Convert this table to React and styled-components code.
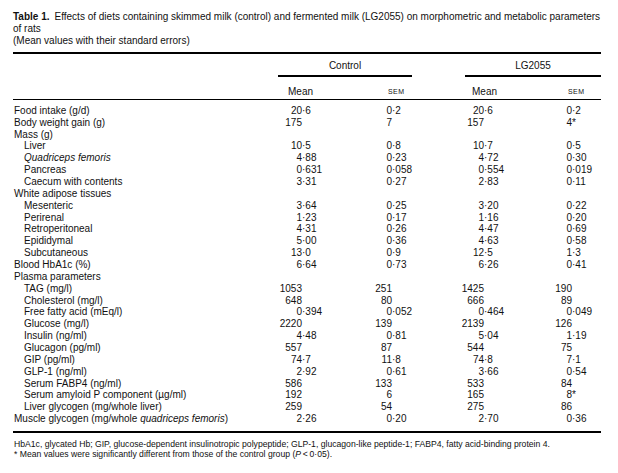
import React from "react"
import styled, { createGlobalStyle } from "styled-components"

const GlobalStyle = createGlobalStyle`
  html, body {
    margin: 0;
    padding: 0;
    background: #fff;
  }
  body {
    font-family: "Liberation Sans", Arial, sans-serif;
    color: #111;
  }
`

const COLS = "257px 95px 90px 100px 46px"

const Page = styled.div`
  width: 588px;
  padding: 11px 0 0 13px;
`

const Caption = styled.div`
  font-size: 10px;
  line-height: 12px;
`

const CaptionLine = styled.div`
  white-space: nowrap;
`

const CaptionLabel = styled.b`
  font-weight: bold;
`

const Table = styled.div`
  margin-top: 5px;
  border-top: 2px solid #000;
  border-bottom: 2px solid #000;
  font-size: 10px;
  line-height: 12px;
`

const HeadRow = styled.div`
  display: grid;
  grid-template-columns: ${COLS};
  border-bottom: ${p => (p.$ruled ? "1px solid #000" : "none")};
  padding-top: ${p => p.$top}px;
  padding-bottom: ${p => p.$bottom}px;
`

const GroupHead = styled.div`
  grid-column: span 2;
  margin-left: ${p => p.$inset}px;
  width: ${p => p.$w}px;
  text-align: center;

  &::after {
    content: "";
    display: block;
    height: 2px;
    margin-top: 3px;
    background: #000;
  }
`

const SubHead = styled.div`
  padding-left: ${p => p.$pad}px;
  font-size: ${p => (p.$small ? "7px" : "10px")};
  letter-spacing: ${p => (p.$small ? "0.4px" : "0")};
`

const Body = styled.div`
  padding: 4.8px 0 6.2px;
`

const Row = styled.div`
  display: grid;
  grid-template-columns: ${COLS};
  height: 11.87px;
  line-height: 11.87px;
  white-space: nowrap;
`

const Label = styled.div`
  padding-left: ${p => (p.$indent ? "11px" : "1px")};
  font-style: ${p => (p.$italic ? "italic" : "normal")};
`

const Cell = styled.div`
  white-space: nowrap;
`

const Int = styled.span`
  display: inline-block;
  width: ${p => p.$w}px;
  text-align: right;
`

const Notes = styled.div`
  margin-top: 5.8px;
  font-size: 8.65px;
  line-height: 10px;
  padding-left: 1px;
`

const NoteLine = styled.div`
  white-space: nowrap;
`

// width of the integer part, so the decimal points line up in each column
const INT_W = [32, 27, 29, 17]

const Num = ({ v, w }) => {
  const star = v.endsWith("*")
  const raw = star ? v.slice(0, -1) : v
  const [int, frac] = raw.split("·")
  return (
    <Cell>
      <Int $w={w}>{int}</Int>
      {frac !== undefined && "·" + frac}
      {star && "*"}
    </Cell>
  )
}

const rows = [
  { label: "Food intake (g/d)", vals: ["20·6", "0·2", "20·6", "0·2"] },
  { label: "Body weight gain (g)", vals: ["175", "7", "157", "4*"] },
  { label: "Mass (g)" },
  { label: "Liver", indent: true, vals: ["10·5", "0·8", "10·7", "0·5"] },
  { label: "Quadriceps femoris", indent: true, italic: true, vals: ["4·88", "0·23", "4·72", "0·30"] },
  { label: "Pancreas", indent: true, vals: ["0·631", "0·058", "0·554", "0·019"] },
  { label: "Caecum with contents", indent: true, vals: ["3·31", "0·27", "2·83", "0·11"] },
  { label: "White adipose tissues" },
  { label: "Mesenteric", indent: true, vals: ["3·64", "0·25", "3·20", "0·22"] },
  { label: "Perirenal", indent: true, vals: ["1·23", "0·17", "1·16", "0·20"] },
  { label: "Retroperitoneal", indent: true, vals: ["4·31", "0·26", "4·47", "0·69"] },
  { label: "Epididymal", indent: true, vals: ["5·00", "0·36", "4·63", "0·58"] },
  { label: "Subcutaneous", indent: true, vals: ["13·0", "0·9", "12·5", "1·3"] },
  { label: "Blood HbA1c (%)", vals: ["6·64", "0·73", "6·26", "0·41"] },
  { label: "Plasma parameters" },
  { label: "TAG (mg/l)", indent: true, vals: ["1053", "251", "1425", "190"] },
  { label: "Cholesterol (mg/l)", indent: true, vals: ["648", "80", "666", "89"] },
  { label: "Free fatty acid (mEq/l)", indent: true, vals: ["0·394", "0·052", "0·464", "0·049"] },
  { label: "Glucose (mg/l)", indent: true, vals: ["2220", "139", "2139", "126"] },
  { label: "Insulin (ng/ml)", indent: true, vals: ["4·48", "0·81", "5·04", "1·19"] },
  { label: "Glucagon (pg/ml)", indent: true, vals: ["557", "87", "544", "75"] },
  { label: "GIP (pg/ml)", indent: true, vals: ["74·7", "11·8", "74·8", "7·1"] },
  { label: "GLP-1 (ng/ml)", indent: true, vals: ["2·92", "0·61", "3·66", "0·54"] },
  { label: "Serum FABP4 (ng/ml)", indent: true, vals: ["586", "133", "533", "84"] },
  { label: "Serum amyloid P component (µg/ml)", indent: true, vals: ["192", "6", "165", "8*"] },
  { label: "Liver glycogen (mg/whole liver)", indent: true, vals: ["259", "54", "275", "86"] },
  {
    label: (
      <>
        Muscle glycogen (mg/whole <i>quadriceps femoris</i>)
      </>
    ),
    vals: ["2·26", "0·20", "2·70", "0·36"],
  },
]

const App = () => {
  return (
    <Page>
      <GlobalStyle />
      <Caption>
        <CaptionLine>
          <CaptionLabel>Table 1.</CaptionLabel>
          {"\u2002Effects of diets containing skimmed milk (control) and fermented milk (LG2055) on morphometric and metabolic parameters"}
        </CaptionLine>
        <CaptionLine>of rats</CaptionLine>
        <CaptionLine>(Mean values with their standard errors)</CaptionLine>
      </Caption>

      <Table>
        <HeadRow $top={6} $bottom={0}>
          <div />
          <GroupHead $inset={8} $w={134}>Control</GroupHead>
          <GroupHead $inset={10} $w={136}>LG2055</GroupHead>
        </HeadRow>
        <HeadRow $ruled $top={9} $bottom={1}>
          <div />
          <SubHead $pad={18}>Mean</SubHead>
          <SubHead $pad={23} $small>SEM</SubHead>
          <SubHead $pad={17}>Mean</SubHead>
          <SubHead $pad={13} $small>SEM</SubHead>
        </HeadRow>

        <Body>
          {rows.map((r, i) => (
            <Row key={i}>
              <Label $indent={r.indent} $italic={r.italic}>{r.label}</Label>
              {r.vals
                ? r.vals.map((v, j) => <Num key={j} v={v} w={INT_W[j]} />)
                : null}
            </Row>
          ))}
        </Body>
      </Table>

      <Notes>
        <NoteLine>
          HbA1c, glycated Hb; GIP, glucose-dependent insulinotropic polypeptide; GLP-1, glucagon-like
          peptide-1; FABP4, fatty acid-binding protein 4.
        </NoteLine>
        <NoteLine>
          * Mean values were significantly different from those of the control group (<i>P</i>
          {"\u2009"}&lt;{"\u2009"}0·05).
        </NoteLine>
      </Notes>
    </Page>
  )
}

export default App
